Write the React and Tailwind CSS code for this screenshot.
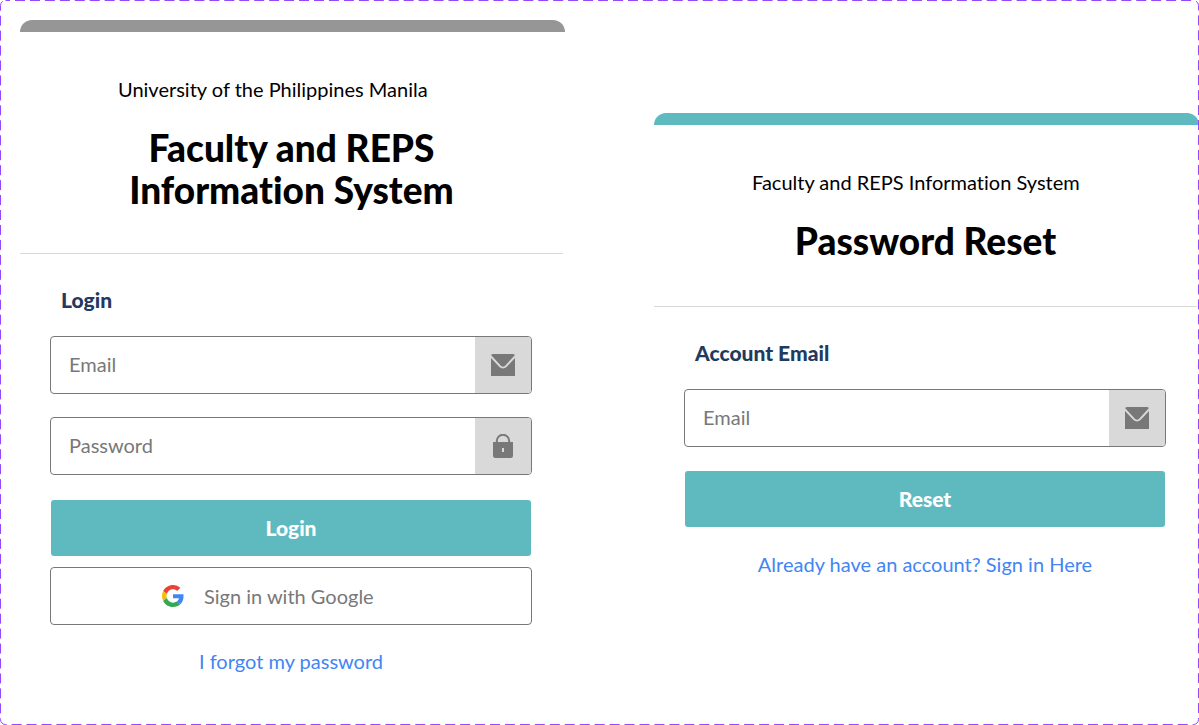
import React from "react";

function MailIcon() {
  return (
    <svg className="h-6 w-6" viewBox="0 0 24 24" aria-hidden="true">
      <path d="M2 1h20a2 2 0 0 1 2 2v20H0V3a2 2 0 0 1 2-2z" fill="#787878" />
      <path d="M-1 2.4L9.2 13.4a4 4 0 0 0 5.6 0L25 2.4" fill="none" stroke="#d9d9d9" strokeWidth="2" />
    </svg>
  );
}

function LockIcon() {
  return (
    <svg className="h-6 w-6" viewBox="0 0 24 24" aria-hidden="true">
      <path d="M5.8 9V7a6.2 6.2 0 0 1 12.4 0v2" fill="none" stroke="#787878" strokeWidth="2" />
      <path
        fill="#787878"
        fillRule="evenodd"
        d="M2 8h20v13.5a2.5 2.5 0 0 1-2.5 2.5h-15A2.5 2.5 0 0 1 2 21.5zM11 14v4h2v-4z"
      />
    </svg>
  );
}

function GoogleIcon() {
  return (
    <svg className="h-[22px] w-[22px]" viewBox="0 0 48 48" aria-hidden="true">
      <path fill="#EA4335" d="M24 9.5c3.54 0 6.71 1.22 9.21 3.6l6.85-6.85C35.9 2.38 30.47 0 24 0 14.62 0 6.51 5.38 2.56 13.22l7.98 6.19C12.43 13.72 17.74 9.5 24 9.5z" />
      <path fill="#4285F4" d="M46.98 24.55c0-1.57-.15-3.09-.38-4.55H24v9.02h12.94c-.58 2.96-2.26 5.48-4.78 7.18l7.73 6c4.51-4.18 7.09-10.36 7.09-17.65z" />
      <path fill="#FBBC05" d="M10.53 28.59c-.48-1.45-.76-2.99-.76-4.59s.27-3.14.76-4.59l-7.98-6.19C.92 16.46 0 20.12 0 24c0 3.88.92 7.54 2.56 10.78l7.97-6.19z" />
      <path fill="#34A853" d="M24 48c6.48 0 11.93-2.13 15.89-5.81l-7.73-6c-2.15 1.45-4.92 2.3-8.16 2.3-6.26 0-11.57-4.22-13.47-9.91l-7.98 6.19C6.51 42.62 14.62 48 24 48z" />
    </svg>
  );
}

function Field({ id, type, placeholder, icon, label }) {
  return (
    <div className="flex h-[58px] overflow-hidden rounded border border-[#787878] bg-white">
      <input
        id={id}
        type={type}
        placeholder={placeholder}
        aria-label={label}
        className="min-w-0 flex-1 px-[18px] pb-0.5 text-xl text-black outline-none placeholder:text-[#787878]"
      />
      <span className="flex w-14 items-center justify-center bg-[#d9d9d9]">{icon}</span>
    </div>
  );
}

function SubmitButton({ children }) {
  return (
    <button
      type="submit"
      className="mx-px h-14 rounded-[3px] bg-[#5fbac0] text-[21px] font-black text-white"
    >
      {children}
    </button>
  );
}

function CardHeader({ subtitle, children }) {
  return (
    <header className="mr-0.5 border-b border-[#d9d9d9] pt-[43px]">
      <p className="pl-[98px] text-xl leading-7">{subtitle}</p>
      <h1 className="mt-6 text-center text-[37px] leading-[42px] font-black">{children}</h1>
    </header>
  );
}

function LoginCard() {
  return (
    <section className="min-w-0 flex-1">
      <div className="h-3 rounded-t-xl bg-[#969696]" />
      <CardHeader subtitle="University of the Philippines Manila">
        <span className="block pb-[42px]">
          Faculty and REPS
          <br />
          Information System
        </span>
      </CardHeader>
      <form className="flex flex-col pt-8 pr-[33px] pl-[30px]" onSubmit={(e) => e.preventDefault()}>
        <label htmlFor="login-email" className="mb-[22px] pl-[11px] text-[21px] leading-7 font-black text-[#223a5e]">
          Login
        </label>
        <Field id="login-email" type="email" placeholder="Email" icon={<MailIcon />} />
        <div className="mt-[23px] mb-[25px]">
          <Field id="login-password" type="password" placeholder="Password" label="Password" icon={<LockIcon />} />
        </div>
        <SubmitButton>Login</SubmitButton>
        <button
          type="button"
          className="mt-[11px] flex h-[58px] items-center gap-5 rounded border border-[#787878] bg-white pl-[111px] text-xl text-[#787878]"
        >
          <GoogleIcon />
          Sign in with Google
        </button>
        <a href="#forgot" className="mt-[22px] self-center text-xl leading-7 text-[#4285f4]">
          I forgot my password
        </a>
      </form>
    </section>
  );
}

function ResetCard() {
  return (
    <section className="mt-[93px] min-w-0 flex-1">
      <div className="h-3 rounded-t-xl bg-[#5fbac0]" />
      <CardHeader subtitle="Faculty and REPS Information System">
        <span className="block pb-11">Password Reset</span>
      </CardHeader>
      <form className="flex flex-col pt-8 pr-[33px] pl-[30px]" onSubmit={(e) => e.preventDefault()}>
        <label htmlFor="reset-email" className="mb-[22px] pl-[11px] text-[21px] leading-7 font-black text-[#223a5e]">
          Account Email
        </label>
        <div className="mb-6">
          <Field id="reset-email" type="email" placeholder="Email" icon={<MailIcon />} />
        </div>
        <SubmitButton>Reset</SubmitButton>
        <a href="#signin" className="mt-[23px] self-center text-xl leading-7 text-[#4285f4]">
          Already have an account? Sign in Here
        </a>
      </form>
    </section>
  );
}

function DashedFrame() {
  return (
    <svg className="pointer-events-none absolute inset-0 h-full w-full" aria-hidden="true">
      <rect
        x="0.5"
        y="0.5"
        rx="5"
        className="h-[calc(100%-1px)] w-[calc(100%-1px)]"
        fill="none"
        stroke="#9747ff"
        strokeDasharray="10 4.95"
        strokeDashoffset="-9.5"
      />
    </svg>
  );
}

export default function App() {
  return (
    <main className="relative flex min-h-screen items-start gap-[89px] bg-white pt-5 pl-5 font-['Lato',sans-serif] text-black [font-variant-ligatures:none]">
      <LoginCard />
      <ResetCard />
      <DashedFrame />
    </main>
  );
}
